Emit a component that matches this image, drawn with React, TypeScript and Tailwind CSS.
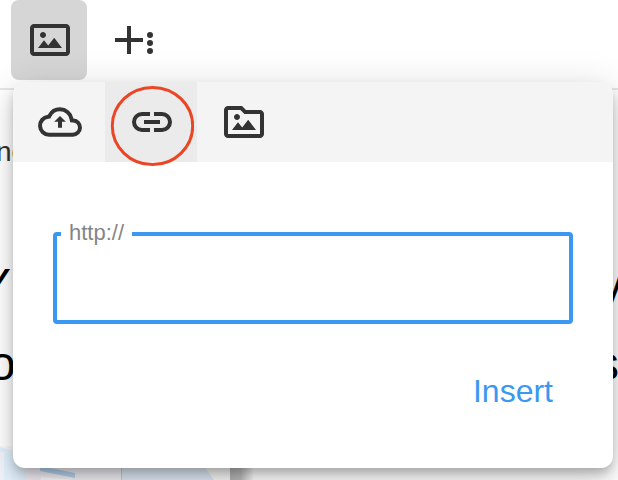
import React, { useState } from "react";

type IconName = "image" | "upload" | "link" | "folder";

const ICONS: Record<IconName, string> = {
  image:
    "M14.2,11l3.8,5H6l3-3.9l2.1,2.7L14,11H14.2z M8.5,11c0.8,0,1.5-0.7,1.5-1.5S9.3,8,8.5,8S7,8.7,7,9.5C7,10.3,7.7,11,8.5,11z M22,6v12c0,1.1-0.9,2-2,2H4c-1.1,0-2-0.9-2-2V6c0-1.1,0.9-2,2-2h16C21.1,4,22,4.9,22,6z M20,8.8V6H4v12h16V8.8z",
  upload:
    "M12 6.667a4.877 4.877 0 0 1 4.775 3.923l.296 1.503 1.528.106a2.57 2.57 0 0 1-.183 5.134H6.5a3.498 3.498 0 0 1-.384-6.974l1.066-.113.496-.952A4.86 4.86 0 0 1 12 6.667m0-2A6.871 6.871 0 0 0 5.904 8.37 5.498 5.498 0 0 0 6.5 19.333h11.917a4.57 4.57 0 0 0 .32-9.13A6.866 6.866 0 0 0 12 4.667Zm1 7.247h1.914L12 9l-2.914 2.914H11v3h2Z",
  link: "M11 17H7A5 5 0 0 1 7 7h4v2H7a3 3 0 0 0 0 6h4ZM17 7h-4v2h4a3 3 0 0 1 0 6h-4v2h4A5 5 0 0 0 17 7Zm-1 4H8v2h8Z",
  folder:
    "M20,6h-7l-2-2H4C2.9,4,2,4.9,2,6v12c0,1.1,0.9,2,2,2h16c1.1,0,2-0.9,2-2V8C22,6.9,21.1,6,20,6z M20,18H4V6h6.2l2,2H20V18z M18,16l-3.8-5H14l-2.9,3.8L9,12.1L6,16H18z M10,9.5C10,8.7,9.3,8,8.5,8S7,8.7,7,9.5S7.7,11,8.5,11S10,10.3,10,9.5z",
};

const TABS: { icon: IconName; label: string }[] = [
  { icon: "upload", label: "Upload Image" },
  { icon: "link", label: "By URL" },
  { icon: "folder", label: "Browse" },
];

function Icon({ name }: { name: IconName }) {
  return (
    <svg viewBox="0 0 24 24" className="size-12 shrink-0 fill-[#333333]" aria-hidden="true">
      <path fillRule="evenodd" d={ICONS[name]} />
    </svg>
  );
}

function Toolbar() {
  return (
    <div className="flex h-[90px] items-start border-b-2 border-[#e6e6e6] bg-white pl-[11px]">
      <button aria-label="Insert Image" className="flex h-20 w-[76px] items-center rounded-lg bg-[#d6d6d6] pl-[15px]">
        <Icon name="image" />
      </button>
      <button aria-label="More Rich" className="flex h-20 items-center pl-6">
        <svg viewBox="0 0 48 48" className="size-12 fill-[#333333]" aria-hidden="true">
          <path d="M16 10h4v12h12v4H20v12h-4V26H4v-4h12Z" />
          <circle cx="39" cy="19" r="3" />
          <circle cx="39" cy="27" r="3" />
          <circle cx="39" cy="35" r="3" />
        </svg>
      </button>
    </div>
  );
}

function Document() {
  return (
    <div className="flex flex-1 flex-col whitespace-nowrap text-black">
      <p className="-ml-1 mt-[46px] text-[28px] leading-8 text-[#333333]">ne</p>
      <div className="-ml-[21px] mt-[79px] flex justify-between text-[48px] leading-[78px]">
        <span>Y</span>
        <span className="-mr-[5px]">y</span>
      </div>
      <div className="-ml-[11px] flex justify-between text-[48px] leading-[78px]">
        <span>o</span>
        <span className="-mr-px">s</span>
      </div>
      {/* top edge of the embedded picture */}
      <svg viewBox="0 0 260 34" className="mt-auto h-[34px] w-[260px]" aria-hidden="true">
        <defs>
          <linearGradient id="edge">
            <stop offset="0" stopColor="#b4b4b4" />
            <stop offset="0.45" stopColor="#bcbcbc" />
            <stop offset="1" stopColor="#fff" />
          </linearGradient>
        </defs>
        <path d="M0 0h230v34H0Z" fill="#f8f8f8" />
        <path d="M0 1l30 9v24H0Z" fill="#e2f1fc" />
        <path d="M0 6h4v28H0Z" fill="#f2f2fb" />
        <path d="M26 8h95v26H26Z" fill="#f1eff5" />
        <path d="M40 20l35 7v5l-35-7Z" fill="#b6d3ee" />
        <path d="M41 31l34 3H41Z" fill="#fafafa" />
        <path d="M122 8h73l19 26h-92Z" fill="#dfeaf5" />
        <path d="M121 8h1v26h-1Z" fill="#c2ccd8" />
        <path d="M230 0h24v34h-24Z" fill="url(#edge)" />
      </svg>
    </div>
  );
}

function ImagePopup() {
  const [active, setActive] = useState<IconName>("link");
  const [url, setUrl] = useState("");

  return (
    <div className="absolute left-[13px] top-[82px] h-[386px] w-[600px] rounded-xl bg-white shadow-[0_6px_10px_-2px_rgba(0,0,0,0.2),0_12px_20px_rgba(0,0,0,0.14),0_2px_36px_rgba(0,0,0,0.12)]">
      <div className="flex h-20 overflow-hidden rounded-t-xl bg-[#f4f4f4]">
        {TABS.map(tab => (
          <button
            key={tab.icon}
            aria-label={tab.label}
            onClick={() => setActive(tab.icon)}
            className={`flex w-[92px] items-center pl-[23px] ${active === tab.icon ? "bg-[#ebebeb]" : ""}`}
          >
            <Icon name={tab.icon} />
          </button>
        ))}
      </div>

      {/* highlight ring around the link tab */}
      <svg viewBox="0 0 84 82" className="pointer-events-none absolute left-[97px] top-[3px] h-[82px] w-[84px]" aria-hidden="true">
        <ellipse cx="42.5" cy="41" rx="40.2" ry="38.6" fill="none" stroke="#ea4626" strokeWidth="3" />
      </svg>

      <div className="px-10 pt-[70px]">
        <div className="relative">
          <label htmlFor="url" className="absolute -top-[11px] left-2 bg-white px-2 text-[22px] leading-6 text-[#858585]">
            http://
          </label>
          <input
            id="url"
            value={url}
            onChange={e => setUrl(e.target.value)}
            className="block h-[92px] w-full rounded-[4px] border-4 border-[#3b98f1] bg-white px-3 text-[28px] outline-none"
          />
        </div>
        <div className="mt-[47px] flex justify-end pr-5">
          <button className="text-[32px] leading-10 text-[#3b98f1]">Insert</button>
        </div>
      </div>
    </div>
  );
}

export default function App() {
  return (
    <div className="relative flex h-[480px] w-[618px] flex-col overflow-hidden bg-white font-['Liberation_Sans',Arial,sans-serif]">
      <Toolbar />
      <Document />
      <ImagePopup />
    </div>
  );
}
